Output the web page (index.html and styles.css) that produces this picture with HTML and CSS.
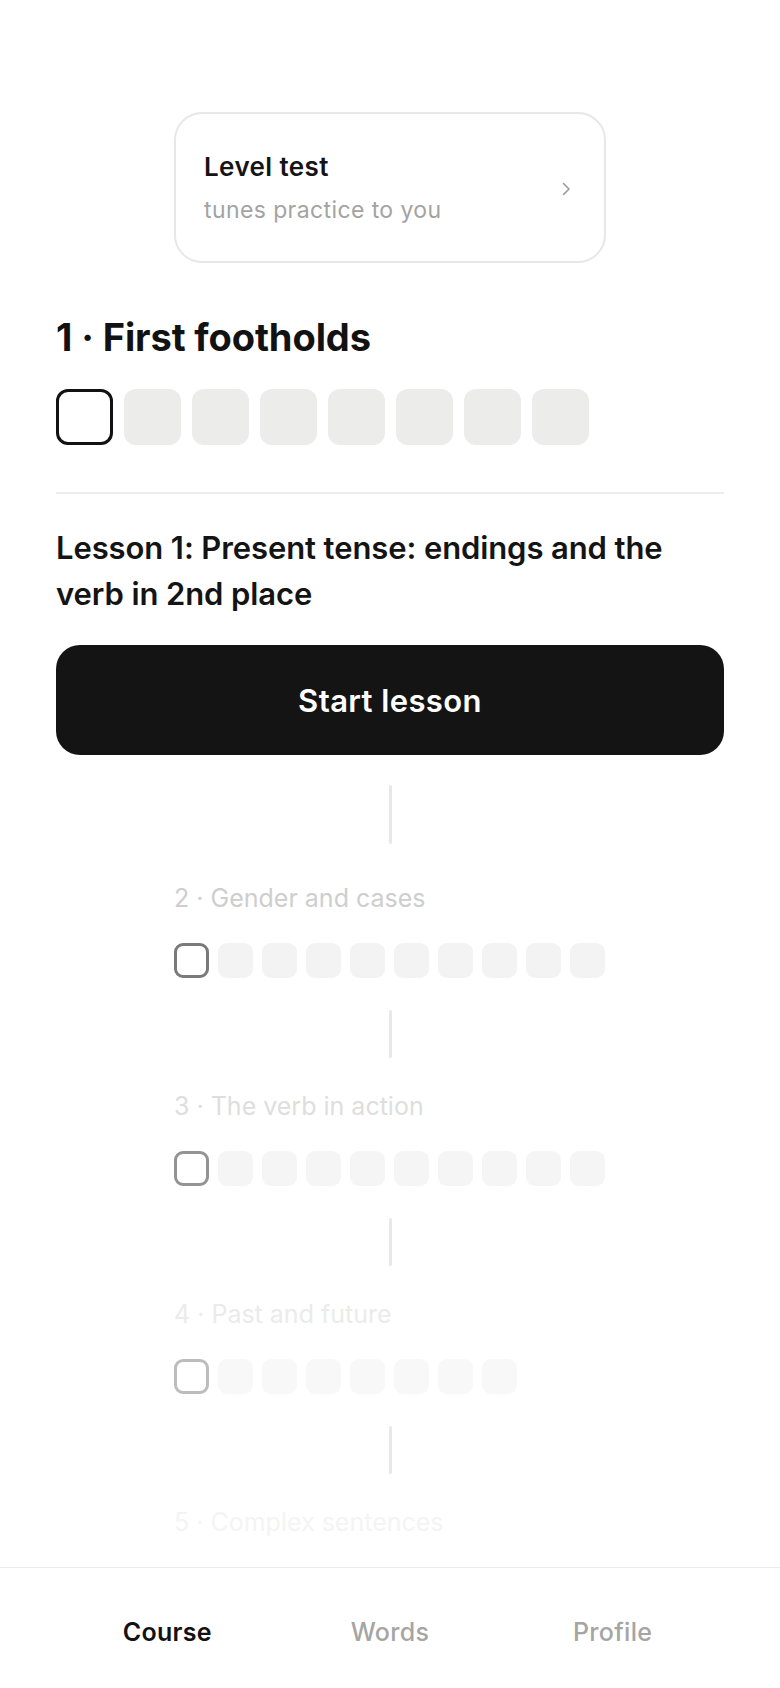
FILE: index.html
```html
<!DOCTYPE html>
<html lang="en">
<head>
<meta charset="utf-8">
<title>Course</title>
<link rel="stylesheet" href="styles.css">
</head>
<body>
<main class="page">
  <a class="level-card" href="#">
    <div class="level-text">
      <div class="level-title">Level test</div>
      <div class="level-sub">tunes practice to you</div>
    </div>
    <svg class="chevron" width="9" height="14" viewBox="0 0 9 14" aria-hidden="true"><path d="M1.5 1.5 L7 7 L1.5 12.5" fill="none" stroke="#9a9a9a" stroke-width="1.6" stroke-linecap="round" stroke-linejoin="round"/></svg>
  </a>

  <h1 class="unit-heading">1 · First footholds</h1>
  <div class="big-squares">
    <span class="bsq current"></span>
    <span class="bsq"></span><span class="bsq"></span><span class="bsq"></span>
    <span class="bsq"></span><span class="bsq"></span><span class="bsq"></span><span class="bsq"></span>
  </div>

  <hr class="divider">

  <h2 class="lesson-title">Lesson 1: Present tense: endings and the verb in 2nd place</h2>
  <button class="start-btn">Start lesson</button>

  <div class="connector first"></div>

  <section class="unit u2">
    <div class="unit-title">2 · Gender and cases</div>
    <div class="squares">
      <span class="sq current"></span><span class="sq"></span><span class="sq"></span><span class="sq"></span><span class="sq"></span>
      <span class="sq"></span><span class="sq"></span><span class="sq"></span><span class="sq"></span><span class="sq"></span>
    </div>
  </section>
  <div class="connector"></div>

  <section class="unit u3">
    <div class="unit-title">3 · The verb in action</div>
    <div class="squares">
      <span class="sq current"></span><span class="sq"></span><span class="sq"></span><span class="sq"></span><span class="sq"></span>
      <span class="sq"></span><span class="sq"></span><span class="sq"></span><span class="sq"></span><span class="sq"></span>
    </div>
  </section>
  <div class="connector"></div>

  <section class="unit u4">
    <div class="unit-title">4 · Past and future</div>
    <div class="squares">
      <span class="sq current"></span><span class="sq"></span><span class="sq"></span><span class="sq"></span>
      <span class="sq"></span><span class="sq"></span><span class="sq"></span><span class="sq"></span>
    </div>
  </section>
  <div class="connector"></div>

  <section class="unit u5">
    <div class="unit-title">5 · Complex sentences</div>
  </section>
</main>

<nav class="tabbar">
  <a class="tab active" href="#">Course</a>
  <a class="tab" href="#">Words</a>
  <a class="tab" href="#">Profile</a>
</nav>
</body>
</html>
```

FILE: styles.css
```css
* { box-sizing: border-box; }

html, body {
  margin: 0;
  padding: 0;
  background: #ffffff;
}

body {
  font-family: Inter, "Noto Sans", "Liberation Sans", sans-serif;
  color: #141414;
  height: 1688px;
  overflow: hidden;
}

.page {
  display: flex;
  flex-direction: column;
  padding: 112px 56px 0;
}

/* Level test card */
.level-card {
  align-self: center;
  width: 432px;
  height: 151px;
  border: 2px solid #e7e7e7;
  border-radius: 28px;
  padding: 0 33px 0 28px;
  display: flex;
  align-items: center;
  justify-content: space-between;
  text-decoration: none;
  color: inherit;
}

.level-text {
  display: flex;
  flex-direction: column;
  gap: 11px;
  padding-top: 2px;
}

.level-title {
  font-size: 26px;
  font-weight: 600;
  line-height: 32px;
  letter-spacing: 0.4px;
  color: #141414;
}

.level-sub {
  font-size: 23px;
  font-weight: 400;
  line-height: 32px;
  letter-spacing: 0.4px;
  color: #a3a3a3;
}

.chevron { flex: none; margin-top: 2px; }

/* Unit 1 */
.unit-heading {
  margin: 52px 0 0;
  font-size: 38px;
  font-weight: 700;
  line-height: 44px;
  letter-spacing: -0.1px;
  color: #121212;
}

.big-squares {
  display: flex;
  gap: 11px;
  margin-top: 30px;
}

.bsq {
  width: 57px;
  height: 56px;
  border-radius: 12px;
  background: #ececea;
}

.bsq.current {
  background: #ffffff;
  border: 3.5px solid #121212;
}

.divider {
  margin: 47px 0 0;
  border: 0;
  height: 2px;
  background: #ededed;
}

.lesson-title {
  margin: 31px 0 0;
  font-size: 31px;
  font-weight: 600;
  line-height: 46px;
  letter-spacing: -0.1px;
  color: #141414;
}

.start-btn {
  margin-top: 28px;
  height: 110px;
  width: 100%;
  border: 0;
  border-radius: 24px;
  background: #141414;
  color: #ffffff;
  font-family: inherit;
  font-size: 31px;
  font-weight: 600;
  letter-spacing: 0.4px;
}

/* Path */
.connector {
  align-self: center;
  width: 3px;
  height: 48px;
  margin: 32px 0;
  background: #e8e8e8;
  border-radius: 2px;
}

.connector.first {
  height: 59px;
  margin: 30px 0 38px;
}

.unit {
  align-self: center;
  width: 432px;
  display: flex;
  flex-direction: column;
}

.unit-title {
  font-size: 25px;
  font-weight: 400;
  line-height: 32px;
  letter-spacing: 0;
}

.squares {
  display: flex;
  gap: 9px;
  margin-top: 29px;
}

.sq {
  width: 35px;
  height: 35px;
  border-radius: 9px;
}

.sq.current {
  background: #ffffff;
  border: 3px solid;
}

.u2 .unit-title { color: #cecece; }
.u2 .sq { background: #f3f3f3; }
.u2 .sq.current { border-color: #7a7a7a; background: #fff; }

.u3 .unit-title { color: #dedede; }
.u3 .sq { background: #f5f5f5; }
.u3 .sq.current { border-color: #939393; background: #fff; }

.u4 .unit-title { color: #ebebeb; }
.u4 .sq { background: #f8f8f8; }
.u4 .sq.current { border-color: #bcbcbc; background: #fff; }

.u5 .unit-title { color: #f4f4f4; }

/* Bottom tab bar */
.tabbar {
  position: fixed;
  left: 0;
  right: 0;
  bottom: 0;
  height: 121px;
  background: #ffffff;
  border-top: 1.5px solid #ececec;
  padding: 48px 56px 0;
  display: grid;
  grid-template-columns: repeat(3, 1fr);
  align-items: start;
}

.tab {
  text-align: center;
  font-size: 25px;
  font-weight: 500;
  line-height: 32px;
  letter-spacing: 0.3px;
  color: #a5a5a3;
  text-decoration: none;
}

.tab.active {
  color: #121212;
  font-weight: 600;
}
```
